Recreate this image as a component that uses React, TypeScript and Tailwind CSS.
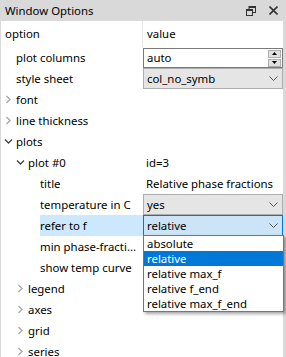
import React from 'react';

const FONT = { fontFamily: '"Noto Sans", "Open Sans", sans-serif' };

type Row = {
  label: string;
  level: number;
  arrow?: 'closed' | 'open';
  value?: React.ReactNode;
  selected?: boolean;
};

const Chevron = ({ open }: { open: boolean }) =>
  open ? (
    <svg width="9" height="9" viewBox="0 0 9 9" className="shrink-0">
      <path d="M1 2.5 L4.5 6 L8 2.5" fill="none" stroke="#404040" strokeWidth="1.3" />
    </svg>
  ) : (
    <svg width="9" height="9" viewBox="0 0 9 9" className="shrink-0">
      <path d="M2.5 1 L6 4.5 L2.5 8" fill="none" stroke="#a6a6a6" strokeWidth="1.3" />
    </svg>
  );

const ComboArrow = () => (
  <svg width="9" height="6" viewBox="0 0 9 6">
    <path d="M0.5 0.5 L4.5 4.5 L8.5 0.5" fill="none" stroke="#555" strokeWidth="1" />
  </svg>
);

const Combo = ({ text, active }: { text: string; active?: boolean }) => (
  <div
    className={`h-[21px] flex items-center justify-between pl-[3px] pr-[4px] border ${
      active ? 'border-[#0078d7] bg-[#cce4f7]' : 'border-[#adadad] bg-[#e5e5e5]'
    }`}
  >
    <span>{text}</span>
    <ComboArrow />
  </div>
);

const SpinBox = ({ text }: { text: string }) => (
  <div className="h-[20px] mt-[1px] flex items-center justify-between pl-[3px] pr-[1px] border border-[#7a7a7a] bg-white">
    <span>{text}</span>
    <div className="flex flex-col gap-[1px]">
      <div className="w-[13px] h-[8px] bg-[#e1e1e1] border border-[#adadad] flex items-center justify-center">
        <svg width="5" height="3" viewBox="0 0 5 3"><path d="M0 3 L2.5 0 L5 3 Z" fill="#000" /></svg>
      </div>
      <div className="w-[13px] h-[8px] bg-[#e1e1e1] border border-[#adadad] flex items-center justify-center">
        <svg width="5" height="3" viewBox="0 0 5 3"><path d="M0 0 L2.5 3 L5 0 Z" fill="#000" /></svg>
      </div>
    </div>
  </div>
);

const rows: Row[] = [
  { label: 'plot columns', level: 0, value: <SpinBox text="auto" /> },
  { label: 'style sheet', level: 0, value: <Combo text="col_no_symb" /> },
  { label: 'font', level: 0, arrow: 'closed' },
  { label: 'line thickness', level: 0, arrow: 'closed' },
  { label: 'plots', level: 0, arrow: 'open' },
  { label: 'plot #0', level: 1, arrow: 'open', value: <span className="pl-[3px]">id=3</span> },
  { label: 'title', level: 2, value: <span className="pl-[3px]">Relative phase fractions</span> },
  { label: 'temperature in C', level: 2, value: <Combo text="yes" /> },
  { label: 'refer to f', level: 2, value: <Combo text="relative" active />, selected: true },
  { label: 'min phase-fracti...', level: 2 },
  { label: 'show temp curve', level: 2 },
  { label: 'legend', level: 1, arrow: 'closed' },
  { label: 'axes', level: 1, arrow: 'closed' },
  { label: 'grid', level: 1, arrow: 'closed' },
  { label: 'series', level: 1, arrow: 'closed' },
];

const options = ['absolute', 'relative', 'relative max_f', 'relative f_end', 'relative max_f_end'];

export default function App() {
  return (
    <div className="w-[286px] h-[357px] overflow-hidden bg-[#d9d9d9] text-[11.4px] text-black leading-[14px] flex flex-col" style={FONT}>
      {/* title bar */}
      <div className="h-[21px] shrink-0 flex items-center pl-[5px] pr-[8px]">
        <span className="flex-1">Window Options</span>
        <svg width="10" height="10" viewBox="0 0 10 10" className="mr-[13px]">
          <rect x="3" y="0.5" width="6.5" height="6" fill="none" stroke="#333" />
          <rect x="0.5" y="3.5" width="6" height="6" fill="#d9d9d9" stroke="#333" />
          <rect x="0.5" y="3.5" width="6" height="1.5" fill="#333" />
          <rect x="3" y="0.5" width="6.5" height="1.5" fill="#333" />
        </svg>
        <svg width="9" height="9" viewBox="0 0 9 9">
          <path d="M0.5 0.5 L8.5 8.5 M8.5 0.5 L0.5 8.5" stroke="#333" strokeWidth="1.6" />
        </svg>
      </div>

      {/* tree */}
      <div className="relative flex-1 ml-[1px] mr-[3px] bg-white">
        <div className="h-[26px] grid grid-cols-[142px_1fr] items-center">
          <span className="pl-[4px] border-r border-[#e5e5e5] h-full flex items-center">option</span>
          <span className="pl-[4px]">value</span>
        </div>
        {rows.map((r) => {
          const indent = 3 + r.level * 12;
          return (
            <div key={r.label} className="h-[21px] grid grid-cols-[142px_1fr]">
              <div className="flex items-center h-full" style={{ paddingLeft: indent }}>
                <span className="w-[12px] flex items-center">
                  {r.arrow ? <Chevron open={r.arrow === 'open'} /> : null}
                </span>
                <span className={`h-full flex items-center flex-1 ${r.selected ? 'bg-[#cce8ff]' : ''}`}>{r.label}</span>
              </div>
              <div className="flex items-center">
                <div className="flex-1">{r.value}</div>
              </div>
            </div>
          );
        })}

        {/* dropdown popup */}
        <div className="absolute left-[142px] top-[214px] w-[141px] bg-white border border-[#767676] shadow-[2px_2px_3px_rgba(0,0,0,0.35)]">
          {options.map((o) => (
            <div
              key={o}
              className={`h-[15px] flex items-center pl-[3px] ${o === 'relative' ? 'bg-[#0078d7] text-white' : ''}`}
            >
              {o}
            </div>
          ))}
        </div>
      </div>
    </div>
  );
}
